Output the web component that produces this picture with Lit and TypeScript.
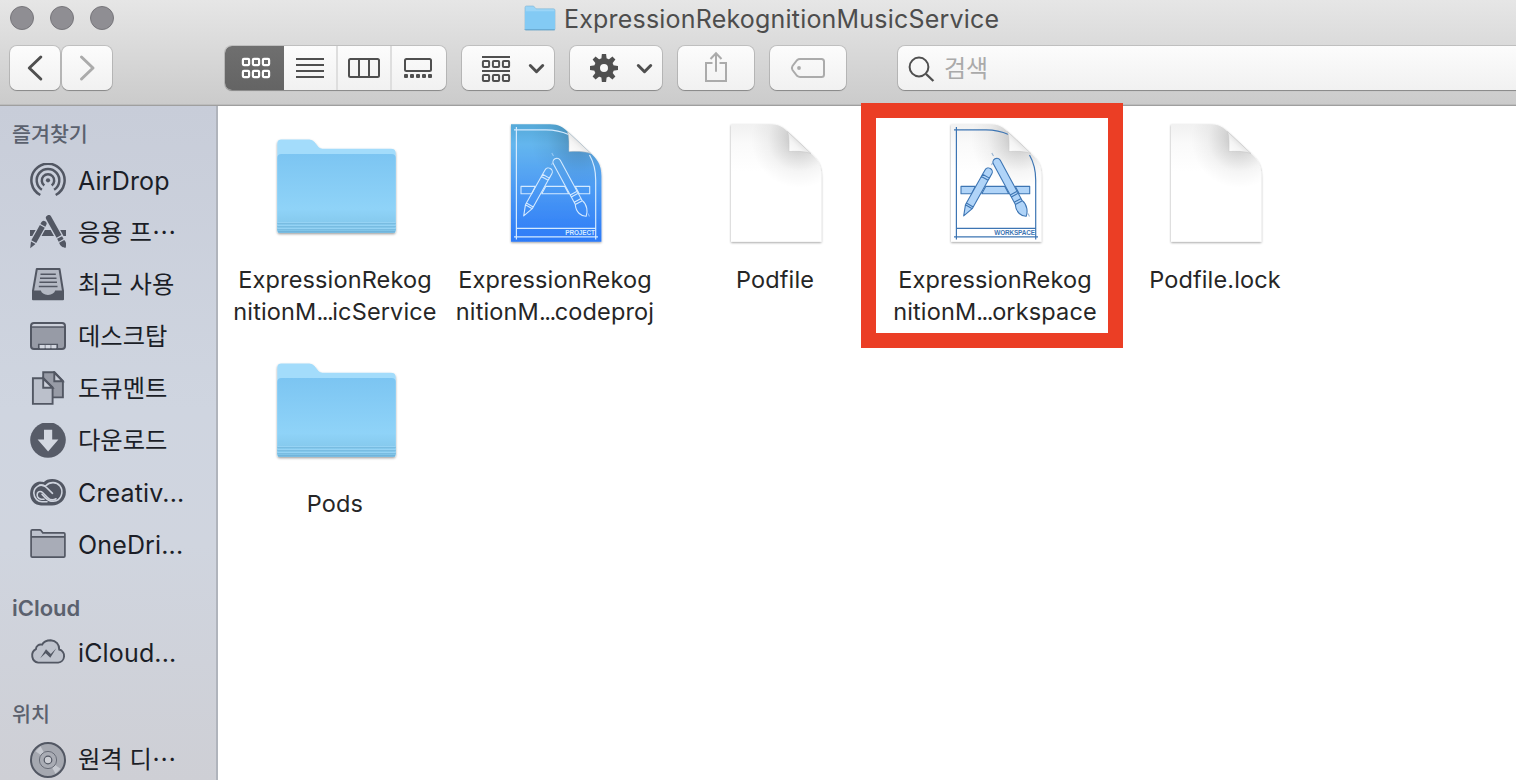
import { LitElement, html, svg, css, nothing } from "lit";
import { customElement, property } from "lit/decorators.js";

const INK = "#525763";
const MID = "#979ba6";

/* ---------- sidebar glyphs, 36 x 36 ---------- */
const sideGlyphs: Record<string, unknown> = {
  airdrop: svg`<g fill="none" stroke=${INK} stroke-width="2.5">
      <path d="M10.3 32A16.6 16.6 0 1 1 25.7 32" />
      <path d="M11.9 26.8A11.3 11.3 0 1 1 24.1 26.8" />
      <path d="M14.3 22.4A6.2 6.2 0 1 1 21.7 22.4" />
    </g><circle cx="18" cy="17.3" r="2.1" fill=${INK} />`,
  apps: svg`<g fill=${INK}>
      <path d="M0 15H5.600L2.300 21H0ZM14.900 15H20.600L24 21H11.600ZM30.200 15H36V21H33.500Z" />
      <g transform="translate(.2 33.2) rotate(29)">
        <path d="M0 0L-2.600 -6.300H2.600ZM-2.800 -7.400V-25H2.800V-7.400ZM-2.800 -26.200V-28A2.800 2.800 0 0 1 2.800 -28V-26.200Z" />
      </g>
      <g transform="translate(35.400 33) rotate(-29)">
        <path d="M-3.800 -24V-35.500H0" fill="#cbd0db" />
        <path d="M0 0C-1.500 -1 -3.800 -3.500 -3 -7.600H2.900C4 -4 1.500 -1 0 0ZM-2.800 -8.800V-12H2.800V-8.800ZM-2.800 -13.200V-34.500A2.800 2.800 0 0 1 2.800 -34.500V-13.200Z" />
      </g>
    </g>`,
  recents: svg`<path d="M6.800 2H29.5L33 24V32.2H3V24Z" fill="#b4b9c4" stroke=${INK} stroke-width="2" stroke-linejoin="round" />
    <g stroke=${INK} stroke-width="1.6"><path d="M10.5 7.3H25.8M10 11.3H26.5M9.4 15.3H27M8.8 19.5H27.5" /></g>
    <path d="M2.6 23.6H10.8C11.5 26 14 28 18 28S24.500 26 25.2 23.6H33.400V31.500Q33.400 33 32 33H4Q2.600 33 2.600 31.500Z" fill=${INK} />`,
  desktop: svg`<rect x="1" y="3.900" width="34" height="26.200" rx="3" fill=${MID} />
    <path d="M2 7V6Q2 4.500 4 4.500H32Q34 4.500 34 6V7Z" fill="#ccd0da" />
    <rect x="1" y="3.900" width="34" height="26.200" rx="3" fill="none" stroke=${INK} stroke-width="2" />
    <path d="M1 8.200H35M8.600 30V25.300H27.400V30" fill="none" stroke=${INK} stroke-width="1.300" />
    <path d="M10 26H14.500V29.200H10ZM15.900 26H20.200V29.200H15.900ZM21.600 26H26V29.200H21.600Z" fill="#d3d7e0" />`,
  documents: svg`<g stroke=${INK} stroke-width="1.900">
      <path d="M13.200 1.300H24.500L32.900 10V26.400H13.200Z" fill=${MID} />
      <path d="M24.300 1.500V10.300H32.700Z" fill="#ccd0da" />
      <path d="M2.900 7.300H13.500L22.600 16.500V32.900H2.900Z" fill="#bbc0cb" />
      <path d="M13.200 7.500V16.800H22.500Z" fill="#ccd0da" />
    </g>`,
  downloads: svg`<circle cx="18" cy="17" r="17.800" fill="#575c68" />
    <path d="M14 6.800H22.200V16.600H28.400L18.100 28.400L7.600 16.600H14Z" fill="#d3d8e1" />`,
  creative: svg`<g fill="none">
      <path d="M9.500 7.200C11.500 7.200 12.500 7.300 14 8C16 5.800 19 4.800 22.200 4.800C29.800 4.800 35.100 10.300 35.100 17C35.100 24.500 29 29.600 22 29.600H11C5 29.600 .9 25 .9 18.800C.9 12 5 7.200 10.500 7.200Z" fill=${INK} stroke=${INK} stroke-width="1.600" />
      <path d="M26 23.800C22.500 26 19.500 24.500 17.500 22.500L12.800 17.800C11 16 8.700 16.200 7.500 18C6.300 21.200 8 23.800 11 24.200H14" stroke="#ced3dd" stroke-width="1.600" stroke-linecap="round" />
      <path d="M9.500 10.300C12.500 9.600 14.500 10.500 16.500 12.500L22.500 18.300" stroke="#ced3dd" stroke-width="1.600" stroke-linecap="round" />
      <path d="M15.800 10.800C20 6.300 26.500 6.800 30 11C34 16.500 31.500 25.500 23.500 26.300C19.500 26.500 17.500 25 15.500 22.900L12 19.300" stroke="#ced3dd" stroke-width="1.600" stroke-linecap="round" />
      <path d="M15 11C10 8.500 4 12 3.800 18C4 24 8.500 26.700 12 26.700H17" stroke="#ced3dd" stroke-width="1.600" stroke-linecap="round" />
    </g>`,
  folder: svg`<path d="M1.100 30V4Q1.100 2.900 2.300 2.900H9.500Q10.800 2.900 11.500 4L12.800 5.800H33.700Q34.900 5.800 34.900 7V29.100Q34.900 30.200 33.700 30.200H2.300Q1.100 30.200 1.100 29Z" fill="#bdc2cd" />
    <path d="M1.500 9.800H34.500V30H1.500Z" fill="#a8acb7" />
    <path d="M1.100 9.800H34.900M1.100 29V4Q1.100 2.900 2.300 2.900H9.500Q10.800 2.900 11.500 4L12.800 5.800H33.700Q34.900 5.800 34.900 7V29.100Q34.900 30.200 33.700 30.200H2.300Q1.100 30.200 1.100 29Z" fill="none" stroke=${INK} stroke-width="1.700" />`,
  cloud: svg`<path d="M8.200 27.600A7.200 7.200 0 0 1 5.900 14.200A4.700 4.700 0 0 1 12 9.700C13.500 6.900 17 5.200 20.800 5.200C26 5.400 29.500 9.600 29.200 14.500A6.700 6.700 0 0 1 28.200 27.600Z" fill="#bfc3cd" stroke=${INK} stroke-width="1.900" />
    <path d="M10.200 23.300L16 14.300L20.800 19L26.300 13.200L20.300 22.800L15.600 18.300Z" fill=${INK} />`,
  disc: svg`<circle cx="18" cy="18" r="17" fill="#a5a8b0" stroke=${INK} stroke-width="2" />
    <path d="M18 18L5.500 9.300L10.500 4.300ZM18 18L30.500 26.700L25.500 31.700Z" fill="#c6c9d0" />
    <circle cx="18" cy="18" r="8.600" fill="#a9acb4" stroke="#696d78" stroke-width="1" />
    <circle cx="18" cy="18" r="3.800" fill="#cdcfd5" stroke=${INK} stroke-width="1.200" />`,
};

/* ---------- large file artwork, 128 x 128 ---------- */
const folderArt = svg`
  <defs>
    <linearGradient id="fb" x1="0" y1="0" x2="0" y2="1"><stop offset="0" stop-color="#7cc5f2" /><stop offset=".7" stop-color="#8fd3f8" /><stop offset="1" stop-color="#7fc3e6" /></linearGradient>
    <filter id="fs" x="-10%" y="-10%" width="120%" height="125%"><feDropShadow dx="0" dy="1.300" stdDeviation="1" flood-opacity=".4" /></filter>
  </defs>
  <path filter="url(#fs)" d="M6.300 110.500V23.500Q6.300 19.500 10.300 19.500H38.500Q41.500 19.500 43.500 22L47.500 27Q49 28.700 51.500 28.700H120Q124.700 28.700 124.700 33V110.500Q124.700 112.700 122.500 112.700H8.500Q6.300 112.700 6.300 110.500Z" fill="#a3dcfb" />
  <path d="M6.300 110.500V38Q6.300 34 10.300 34H120.700Q124.700 34 124.700 38V110.500Q124.700 112.700 122.500 112.700H8.500Q6.300 112.700 6.300 110.500Z" fill="url(#fb)" />
  <path d="M6.300 102.500H124.700M6.300 105.500H124.700M6.300 108.500H124.700" stroke="#96d3f4" stroke-width="1" />
  <path d="M6.300 103.500H124.700M6.300 106.500H124.700M6.300 109.500H124.700" stroke="#79bce1" stroke-width="1" />
  <path d="M7 111.900H124" stroke="#6cafd7" stroke-width="1.200" />`;

const PAGE = "M20 4.300H59C68 4.300 72.500 7.800 78 12.700L99 32.500C105.500 38.500 110.400 44 110.400 56V121.700H20Z";

const tools = (line: string, fill: string) => svg`<g fill=${fill} stroke=${line} stroke-width="1.100" stroke-linejoin="round">
    <path d="M30 66.400H44.300L40.600 73.700H30ZM54.700 66.400H73.800L77.700 73.700H50.800ZM84.300 66.400H98.700V73.700H88.200Z" />
    <g transform="translate(32.700 95.900) rotate(29.300)">
      <path d="M0 0L-3.900 -10.500H3.900ZM-3.900 -10.500V-12.500H3.900V-10.500M-3.900 -12.500V-43H3.900V-12.500M-3.900 -43V-45.500H3.900V-43M-3.900 -45.500V-50.500A3.900 3.900 0 0 1 3.900 -50.500V-45.500Z" />
    </g>
    <g transform="translate(95.200 96.200) rotate(-28.500)">
      <path d="M0 0C-4 -2 -7.500 -8 -4 -15.500H4C6.500 -9.500 3.500 -3 0 0ZM-3.900 -15.500V-18H3.900V-15.500M-3.900 -18V-24H3.900V-18M-3.900 -24V-26.300H3.900V-24M-3.900 -26.300V-61.500A3.900 3.900 0 0 1 3.900 -61.500V-26.300Z" />
    </g>
    <path d="M62.500 36L60.800 33M98.500 96.500L97 93.500M60.500 45L61.500 43" fill="none" opacity=".5" />
  </g>`;

const pageArt = (kind: "blank" | "project" | "workspace") => {
  const project = kind === "project";
  const line = project ? "#d4eaff" : "#3d75b3";
  return svg`
    <defs>
      <linearGradient id="pg" x1="0" y1="0" x2="0" y2="1">
        <stop offset="0" stop-color=${project ? "#55a9d8" : "#f1f1f1"} />
        <stop offset=".17" stop-color=${project ? "#64b6ee" : "#fafafa"} />
        <stop offset=".4" stop-color=${project ? "#56a5f2" : "#ffffff"} />
        <stop offset="1" stop-color=${project ? "#2c7af8" : "#ffffff"} />
      </linearGradient>
      <radialGradient id="sh" gradientUnits="userSpaceOnUse" cx="88" cy="20" r="48">
        <stop offset="0" stop-color="#000" stop-opacity=".24" /><stop offset=".33" stop-color="#000" stop-opacity=".13" /><stop offset=".65" stop-color="#000" stop-opacity=".04" /><stop offset="1" stop-color="#000" stop-opacity="0" />
      </radialGradient>
      <linearGradient id="cu" x1="0" y1="1" x2=".6" y2=".4"><stop offset="0" stop-color="#fff" /><stop offset=".6" stop-color="#f4f4f4" /><stop offset="1" stop-color="#dcdcdc" /></linearGradient>
      <filter id="ps" x="-10%" y="-10%" width="120%" height="120%"><feDropShadow dx="0" dy="1" stdDeviation="1.100" flood-opacity=".38" /></filter>
    </defs>
    <path d=${PAGE} fill="url(#pg)" filter="url(#ps)" />
    <path d=${PAGE} fill="url(#sh)" />
    ${kind === "blank" ? nothing : svg`
      <path d="M25.400 7V119.500M23 9.800H55C64 9.800 70 11 77.500 14.500M98.500 35C102.500 42 104.700 50 104.700 60V119.500M23 116.800H107M25.400 108.400H104.700" fill="none" stroke=${line} stroke-width="1.200" />
      ${tools(line, project ? "none" : "#b0d4f8")}
      <text x="103.800" y="114.900" text-anchor="end" class=${project ? "stamp" : "stamp narrow"} fill=${line}>${project ? "PROJECT" : "WORKSPACE"}</text>`}
    <path d="M76.500 11.500C78.500 17 78 25 78 31.500C85 31.200 93 31 100 33.500Z" fill="url(#cu)" stroke="#c4c4c4" stroke-width=".5" />`;
};

@customElement("side-item")
export class SideItem extends LitElement {
  @property() glyph = "";
  @property() label = "";
  @property({ type: Boolean }) korean = false;

  static styles = css`
    :host { display: flex; align-items: center; height: 52px; padding-left: 30px; }
    .glyph { width: 36px; height: 36px; margin-right: 12px; flex: none; }
    .label { font-size: 25px; letter-spacing: 0.15px; color: #1b1e27; white-space: pre; line-height: 36px; }
    .korean { font-size: 24.3px; letter-spacing: 0; padding-bottom: 2px; }
  `;

  render() {
    return html`<svg class="glyph" viewBox="0 0 36 36">${sideGlyphs[this.glyph]}</svg>
      <span class="label ${this.korean ? "korean" : ""}">${this.label}</span>`;
  }
}

@customElement("file-item")
export class FileItem extends LitElement {
  @property() kind = "folder";
  @property({ attribute: false }) lines: string[] = [];

  static styles = css`
    :host { display: flex; flex-direction: column; align-items: center; width: 220px; height: 224px; }
    .art { width: 128px; height: 128px; margin-bottom: 16px; }
    .line { height: 32px; line-height: 32px; font-size: 23.5px; letter-spacing: 0.14px; color: #262626; white-space: nowrap; }
    .dots { letter-spacing: -1.500px; }
    .stamp { font: 700 6.400px "Liberation Sans", Arial, sans-serif; letter-spacing: -0.100px; }
    .narrow { letter-spacing: -0.150px; }
  `;

  /* The ellipsis in a shortened name is set tighter than its letters. */
  private name(text: string) {
    const [head, tail] = text.split("...");
    return tail === undefined ? head : html`${head}<span class="dots">...</span>${tail}`;
  }

  render() {
    return html`<svg class="art" viewBox="0 0 128 128">
        ${this.kind === "folder" ? folderArt : pageArt(this.kind as "blank" | "project" | "workspace")}
      </svg>
      ${this.lines.map((l) => html`<div class="line">${this.name(l)}</div>`)}`;
  }
}

const FILES = [
  { kind: "folder", lines: ["ExpressionRekog", "nitionM...icService"] },
  { kind: "project", lines: ["ExpressionRekog", "nitionM...codeproj"] },
  { kind: "blank", lines: ["Podfile"] },
  { kind: "workspace", lines: ["ExpressionRekog", "nitionM...orkspace"] },
  { kind: "blank", lines: ["Podfile.lock"] },
  { kind: "folder", lines: ["Pods"] },
];

const FAVORITES = [
  { glyph: "airdrop", label: "AirDrop" },
  { glyph: "apps", label: "응용 프⋯", korean: true },
  { glyph: "recents", label: "최근 사용", korean: true },
  { glyph: "desktop", label: "데스크탑", korean: true },
  { glyph: "documents", label: "도큐멘트", korean: true },
  { glyph: "downloads", label: "다운로드", korean: true },
  { glyph: "creative", label: "Creativ..." },
  { glyph: "folder", label: "OneDri..." },
];

const cells = (x: number, y: number) => [0, 10, 20].map((d) => svg`<rect x=${x + d} y=${y} width="6.200" height="6.200" rx="1" />`);
const teeth = [0, 45, 90, 135, 180, 225, 270, 315].map((a) => svg`<path d="M-2.700 -9L-2.100 -14H2.100L2.700 -9Z" transform="rotate(${a})" />`);

@customElement("app-root")
export class AppRoot extends LitElement {
  static styles = css`
    :host {
      display: flex; flex-direction: column; width: 1516px; height: 780px; overflow: hidden;
      position: relative; background: #fff;
      font-family: Inter, "Noto Sans CJK KR", sans-serif;
    }
    .chrome {
      box-sizing: border-box; height: 106px; flex: none;
      background: linear-gradient(#e6e6e6, #cbcbcb);
      border-bottom: 1px solid #9f9f9f; box-shadow: inset 0 -1px #bcbcbc;
    }
    .titlebar { display: flex; height: 45px; padding-left: 10px; }
    .light { box-sizing: border-box; width: 24px; height: 24px; margin: 6px 16px 0 0; border-radius: 50%; background: #8f8e93; border: 1px solid #77767b; }
    .title { display: flex; margin-left: 394px; height: 38px; align-items: center; }
    .title-icon { width: 32px; height: 32px; margin-right: 8px; }
    .title-text { font-size: 25px; letter-spacing: 0.2px; color: #4d4d4d; white-space: nowrap; }
    .tools { display: flex; padding-left: 10px; align-items: center; height: 46px; }
    .btn {
      display: flex; box-sizing: border-box; height: 44px; border-radius: 7px; flex: none;
      background: linear-gradient(#fcfcfc, #f1f1f1);
      box-shadow: 0 0 0 1px rgba(0,0,0,.12), 0 1px 1px rgba(0,0,0,.25);
    }
    .nav { width: 50px; margin-right: 2px; }
    .views { width: 221px; margin-left: 111px; overflow: hidden; }
    .view { box-sizing: border-box; width: 54px; border-left: 2px solid #dedede; }
    .view.first { border-left: 0; width: 52px; }
    .view.last { width: 56px; }
    .view.active { border: 0; width: 59px; background: linear-gradient(#6f6f6f, #646464); }
    .menu { width: 92px; margin-left: 16px; }
    .single { width: 76px; margin-left: 16px; }
    .search { width: 640px; margin-left: 52px; align-items: center; }
    .placeholder { font-size: 24px; color: #aaa; margin-left: 2px; padding-bottom: 3px; }
    .ico { display: block; height: 44px; overflow: visible; }
    .body { display: flex; flex: 1; min-height: 0; }
    .sidebar {
      box-sizing: border-box; width: 218px; flex: none; border-right: 2px solid #b0b4bc; overflow: hidden;
      padding-top: 7px; background: linear-gradient(#c8cdd9, #cfd5e0 45%, #d0d5df 65%, #cecfd5);
    }
    .heading { display: flex; box-sizing: border-box; align-items: center; height: 42px; padding-left: 12px; font-size: 22px; font-weight: 600; color: #5b616e; }
    .heading.kr { font-size: 20.600px; font-weight: 500; padding-bottom: 3px; }
    .heading.icloud { height: 38px; margin-top: 18px; }
    .heading.places { height: 38px; margin-top: 17px; padding-bottom: 4px; }
    .files { display: grid; grid-template-columns: repeat(5, 220px); grid-auto-rows: 224px; align-content: start; padding: 14px 0 0 7px; }
    .marker { position: absolute; box-sizing: border-box; left: 861px; top: 103px; width: 262px; height: 245px; border: 15px solid #eb3e25; }
  `;

  render() {
    const dark = "#4f4f4f";
    const pale = "#ababab";
    return html`
      <header class="chrome">
        <div class="titlebar">
          <span class="light"></span><span class="light"></span><span class="light"></span>
          <div class="title">
            <svg class="title-icon" viewBox="0 0 32 32">
              <path d="M1 27V4.500Q1 3 2.500 3H9.500L12 5.800H29.500Q31 5.800 31 7.300V26Q31 26.800 30 26.800H2Q1 26.800 1 26Z" fill="#9bd5f7" stroke="#7db4d4" stroke-width=".6" />
              <path d="M1 8.300H31V26Q31 26.800 30 26.800H2Q1 26.800 1 26Z" fill="#83caf4" />
              <path d="M1.200 26.800H30.800" stroke="#5f9fc6" stroke-width="1" />
            </svg>
            <span class="title-text">ExpressionRekognitionMusicService</span>
          </div>
        </div>
        <div class="tools">
          <div class="btn nav"><svg class="ico" width="50" viewBox="0 0 50 44"><path d="M30.800 11L19.300 22L30.800 33" fill="none" stroke=${dark} stroke-width="3" stroke-linecap="round" stroke-linejoin="round" /></svg></div>
          <div class="btn nav"><svg class="ico" width="50" viewBox="0 0 50 44"><path d="M19.500 11L31 22L19.500 33" fill="none" stroke=${pale} stroke-width="3" stroke-linecap="round" stroke-linejoin="round" /></svg></div>
          <div class="btn views">
            <div class="view active"><svg class="ico" width="59" viewBox="225 46 59 44"><g fill="none" stroke="#fff" stroke-width="2.200">${cells(242.9, 58.9)}${cells(242.9, 70.9)}</g></svg></div>
            <div class="view first"><svg class="ico" width="52" viewBox="284 46 52 44"><path d="M296 59H324M296 65H324M296 71H324M296 77H324" stroke=${dark} stroke-width="2" /></svg></div>
            <div class="view"><svg class="ico" width="52" viewBox="338 46 52 44"><rect x="349" y="59" width="30" height="18" rx="1.500" fill="none" stroke=${dark} stroke-width="2" /><path d="M359 59V77M369 59V77" stroke=${dark} stroke-width="2" /></svg></div>
            <div class="view last"><svg class="ico" width="54" viewBox="392 46 54 44"><rect x="405" y="59" width="26" height="12" rx="1.500" fill="none" stroke=${dark} stroke-width="2" />${[0, 6, 12, 18, 24].map((d) => svg`<rect x=${404 + d} y="74" width="4" height="4" rx="1" fill=${dark} />`)}</svg></div>
          </div>
          <div class="btn menu"><svg class="ico" width="92" viewBox="462 46 92 44">
            <g fill="none" stroke=${dark} stroke-width="2"><path d="M482 57H510M482 71H510" />${cells(482.9, 60.9)}${cells(482.9, 74.9)}</g>
            <path d="M530.300 65.500L536.500 71.700L542.700 65.500" fill="none" stroke=${dark} stroke-width="3" stroke-linecap="round" stroke-linejoin="round" /></svg></div>
          <div class="btn menu"><svg class="ico" width="92" viewBox="570 46 92 44">
            <g transform="translate(604 68)"><g fill=${dark}>${teeth}</g><circle r="7" fill="none" stroke=${dark} stroke-width="6" /></g>
            <path d="M638.300 65.500L644.500 71.700L650.700 65.500" fill="none" stroke=${dark} stroke-width="3" stroke-linecap="round" stroke-linejoin="round" /></svg></div>
          <div class="btn single"><svg class="ico" width="76" viewBox="678 46 76 44"><path d="M712.500 63H706V81H726V63H719.500M716 71.700V53.500M710.500 59L716 53.300L721.500 59" fill="none" stroke=${pale} stroke-width="2" /></svg></div>
          <div class="btn single"><svg class="ico" width="76" viewBox="770 46 76 44"><path d="M800 59H821.500Q824 59 824 61.500V74.500Q824 77 821.500 77H800Q798.500 77 797 75.800L792.500 70Q791.300 68 792.500 66L797 60.200Q798.300 59 800 59Z" fill="none" stroke=${pale} stroke-width="2" /><circle cx="799" cy="68" r="1.900" fill=${pale} /></svg></div>
          <div class="btn search"><svg class="ico" width="44" viewBox="898 46 44 44"><circle cx="919" cy="67" r="9.400" fill="none" stroke=${dark} stroke-width="2" /><path d="M926 74L933.400 81" stroke=${dark} stroke-width="2.400" /></svg><span class="placeholder">검색</span></div>
        </div>
      </header>
      <div class="body">
        <nav class="sidebar">
          <div class="heading kr">즐겨찾기</div>
          ${FAVORITES.map((f) => html`<side-item glyph=${f.glyph} label=${f.label} ?korean=${f.korean}></side-item>`)}
          <div class="heading icloud">iCloud</div>
          <side-item glyph="cloud" label="iCloud..."></side-item>
          <div class="heading kr places">위치</div>
          <side-item glyph="disc" label="원격 디⋯" korean></side-item>
        </nav>
        <main class="files">${FILES.map((f) => html`<file-item kind=${f.kind} .lines=${f.lines}></file-item>`)}</main>
      </div>
      <div class="marker"></div>
    `;
  }
}
